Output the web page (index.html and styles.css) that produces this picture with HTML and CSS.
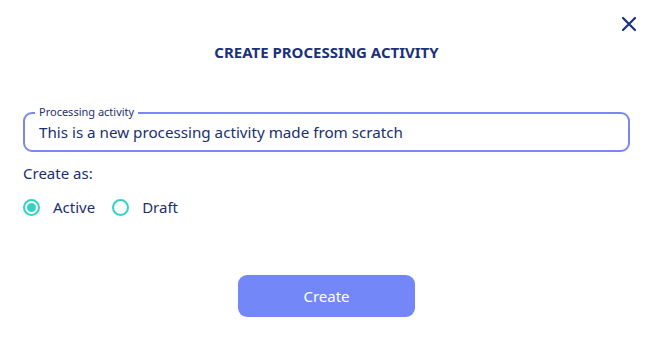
FILE: index.html
```html
<!DOCTYPE html>
<html>
<head>
<meta charset="utf-8">
<link rel="stylesheet" href="styles.css">
</head>
<body>
<div class="modal">
  <div class="topbar">
    <button class="close" aria-label="Close">
      <svg width="16" height="16" viewBox="0 0 16 16"><path d="M2 2 L14 14 M14 2 L2 14" stroke="#1b3178" stroke-width="2.2" stroke-linecap="round" fill="none"/></svg>
    </button>
  </div>
  <h1 class="title">CREATE PROCESSING ACTIVITY</h1>
  <div class="field">
    <span class="field-label">Processing activity</span>
    <div class="field-value">This is a new processing activity made from scratch</div>
  </div>
  <div class="create-as">Create as:</div>
  <div class="radios">
    <label class="radio"><span class="dot checked"></span><span class="radio-text">Active</span></label>
    <label class="radio"><span class="dot"></span><span class="radio-text">Draft</span></label>
  </div>
  <div class="actions">
    <button class="create-btn">Create</button>
  </div>
</div>
</body>
</html>
```

FILE: styles.css
```css
html, body {
  margin: 0;
  padding: 0;
  background: #ffffff;
}
body {
  font-family: "Noto Sans", "Open Sans", sans-serif;
  color: #1b2f6e;
}
.modal {
  width: 653px;
  height: 340px;
  box-sizing: border-box;
  padding: 14px 23px 0 23px;
  display: flex;
  flex-direction: column;
}
.topbar {
  display: flex;
  justify-content: flex-end;
  height: 20px;
}
.close {
  border: 0;
  background: none;
  padding: 0;
  margin-right: -9px;
  width: 20px;
  height: 20px;
  display: flex;
  align-items: center;
  justify-content: center;
  cursor: pointer;
}
.title {
  margin: 8px 0 0 0;
  text-align: center;
  font-size: 15px;
  font-weight: 700;
  color: #1b3178;
  line-height: 20px;
}
.field {
  position: relative;
  margin: 50px 0 0 0;
  padding: 0 14px;
  height: 40px;
  box-sizing: border-box;
  border: 2px solid #7b86f5;
  border-radius: 9px;
  display: flex;
  align-items: center;
}
.field-label {
  position: absolute;
  left: 10px;
  top: -9px;
  font-size: 11px;
  color: #1b2f6e;
  padding: 0 4px;
  line-height: 14px;
  background: #ffffff;
}
.field-value {
  font-size: 15.2px;
  line-height: 20px;
  color: #1b2f6e;
}
.create-as {
  margin-top: 11px;
  font-size: 15px;
  line-height: 20px;
}
.radios {
  margin-top: 14px;
  display: flex;
  gap: 17px;
  align-items: center;
}
.radio {
  display: flex;
  align-items: center;
  gap: 13px;
  font-size: 15px;
  line-height: 20px;
}
.dot {
  width: 17px;
  height: 17px;
  box-sizing: border-box;
  border: 2px solid #33d3c4;
  border-radius: 50%;
  display: flex;
  align-items: center;
  justify-content: center;
}
.dot.checked::after {
  content: "";
  width: 9px;
  height: 9px;
  border-radius: 50%;
  background: #33d3c4;
}
.actions {
  margin-top: 58px;
  display: flex;
  justify-content: center;
}
.create-btn {
  width: 177px;
  height: 42px;
  border: 0;
  border-radius: 9px;
  background: #7487f9;
  color: #ffffff;
  font-family: "Noto Sans", "Open Sans", sans-serif;
  font-size: 15px;
}
```
